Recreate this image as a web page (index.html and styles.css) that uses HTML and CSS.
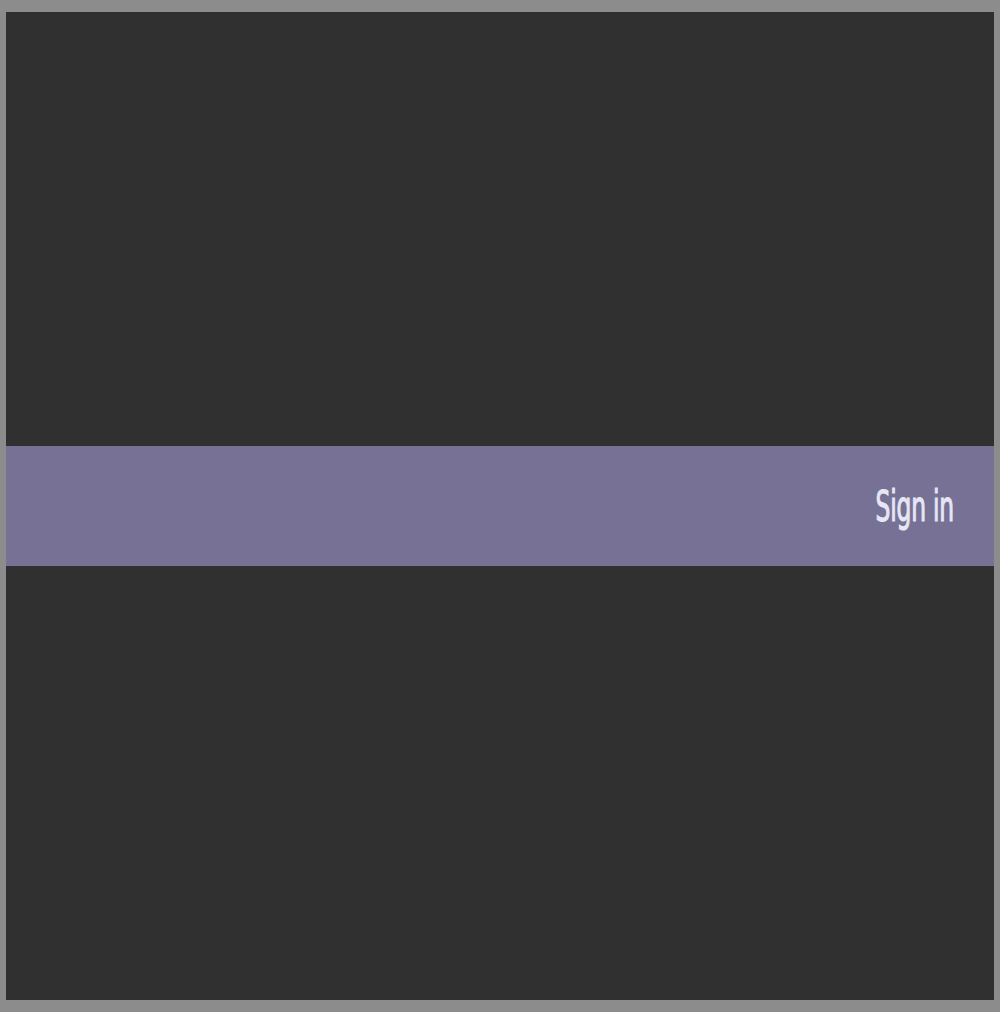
FILE: index.html
```html
<!DOCTYPE html>
<html lang="en">
<head>
<meta charset="utf-8">
<title>Sign in</title>
<link rel="stylesheet" href="styles.css">
</head>
<body>
<div class="frame">
  <div class="band">
    <a class="signin" href="#">Sign in</a>
  </div>
</div>
</body>
</html>
```
FILE: styles.css
```css
html, body {
  margin: 0;
  padding: 0;
}
body {
  background: #8c8c8c;
  width: 1000px;
  height: 1012px;
  padding: 12px 6px;
  box-sizing: border-box;
}
.frame {
  background: #303030;
  height: 988px;
  display: flex;
  flex-direction: column;
  justify-content: center;
}
.band {
  background: #777196;
  height: 120px;
  display: flex;
  align-items: center;
  justify-content: flex-end;
  padding-right: 40px;
}
.signin {
  display: inline-block;
  font-family: "DejaVu Sans Condensed", "DejaVu Sans", sans-serif;
  font-stretch: condensed;
  font-size: 26px;
  color: #e6e6f4;
  text-decoration: none;
  transform: scaleY(1.62);
  transform-origin: right center;
  letter-spacing: -0.2px;
  -webkit-text-stroke: 0.7px #e6e6f4;
}
```
